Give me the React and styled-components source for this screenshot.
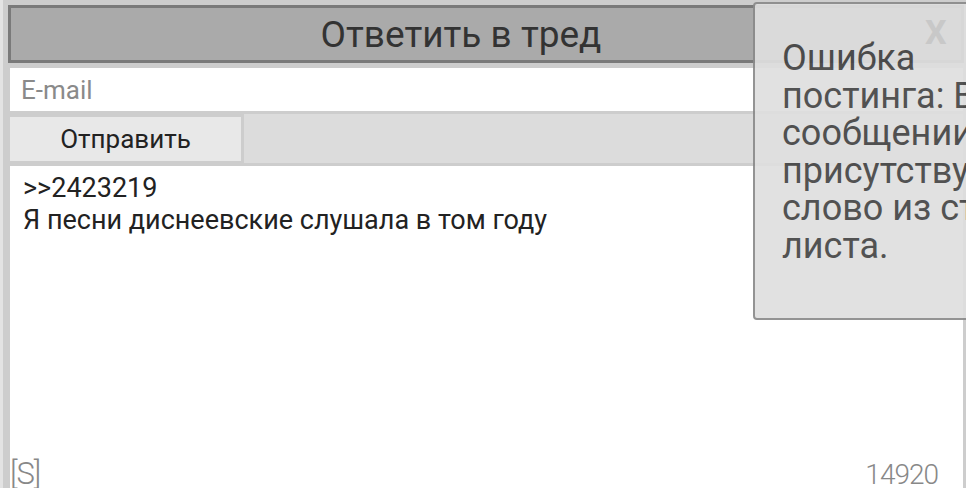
import styled, { createGlobalStyle } from "styled-components";

const GlobalStyle = createGlobalStyle`
  html, body {
    margin: 0;
    padding: 0;
    overflow: hidden;
    background: #e3e3e3;
    font-family: Roboto, "Noto Sans", sans-serif;
  }
`;

const Page = styled.div`
  height: 488px;
  padding-left: 3px;
`;

const Form = styled.div`
  height: 100%;
  box-sizing: border-box;
  background: #cdcdcd;
  padding: 5px 3px 0 7px;
  display: flex;
  flex-direction: column;
`;

const Header = styled.div`
  height: 58px;
  box-sizing: border-box;
  margin: 0 -1px 0 -2px;
  padding-right: 50px;
  background: #aaaaaa;
  border: 3px solid #7a7a7a;
  color: #333;
  font-size: 37px;
  display: flex;
  align-items: center;
  justify-content: center;
`;

const Email = styled.div`
  margin-top: 5px;
  height: 43px;
  background: #fff;
  padding-left: 11px;
  color: #8a8a8a;
  font-size: 26px;
  display: flex;
  align-items: center;
`;

const Row = styled.div`
  display: flex;
  background: #dcdcdc;
  border-top: 3px solid #cdcdcd;
  border-bottom: 3px solid #cdcdcd;
  height: 55px;
  box-sizing: border-box;
`;

const Button = styled.div`
  width: 234px;
  box-sizing: border-box;
  background: #e8e8e8;
  border: 3px solid #cdcdcd;
  border-left: none;
  border-bottom-width: 2px;
  color: #222;
  font-size: 26px;
  display: flex;
  align-items: center;
  justify-content: center;
`;

const TextArea = styled.div`
  position: relative;
  flex: 1;
  background: #fff;
  padding: 6px 13px;
  color: #222;
  font-size: 27px;
  line-height: 32px;
`;

const Corner = styled.span`
  position: absolute;
  bottom: -1px;
  ${(p) => (p.$right ? "right: 25px;" : "left: 0;")}
  color: #888;
  font-size: ${(p) => (p.$right ? "28px" : "31px")};
  font-weight: 300;
  line-height: 1;
  letter-spacing: -1px;
`;

const Popup = styled.div`
  position: fixed;
  left: 753px;
  top: 2px;
  width: 262px;
  padding: 36px 30px 53px 27px;
  background: #dfdfdf;
  border: 2px solid #8a8a8a;
  border-radius: 4px;
  opacity: 0.92;
  color: #444;
  font-size: 36px;
  line-height: 37.5px;
`;

const Close = styled.span`
  position: absolute;
  top: 10px;
  left: 170px;
  color: #cbcbcb;
  font-size: 34px;
  font-weight: 700;
`;

export default function App() {
  return (
    <Page>
      <GlobalStyle />
      <Form>
        <Header>Ответить в тред</Header>
        <Email>E-mail</Email>
        <Row>
          <Button>Отправить</Button>
        </Row>
        <TextArea>
          &gt;&gt;2423219
          <br />
          Я песни диснеевские слушала в том году
          <Corner>[S]</Corner>
          <Corner $right>14920</Corner>
        </TextArea>
      </Form>
      <Popup>
        <Close>X</Close>
        Ошибка постинга: В сообщении присутствует слово из стоп-листа.
      </Popup>
    </Page>
  );
}
